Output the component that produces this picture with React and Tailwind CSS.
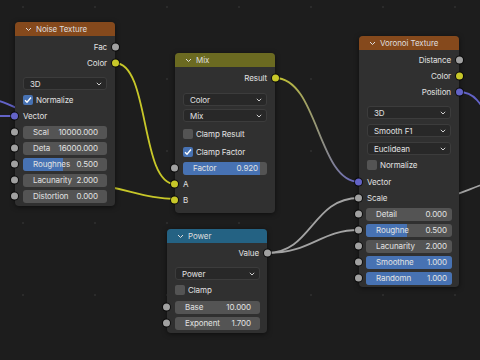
import React from "react";

const FONT = "font-['Inter','Liberation_Sans',sans-serif]";

function Socket({ side, color }) {
  const pos = side === "left" ? "left-[-4px]" : "right-[-4px]";
  const col =
    color === "yellow" ? "bg-[#c7c729]" : color === "purple" ? "bg-[#6363c7]" : "bg-[#a1a1a1]";
  return (
    <span
      className={`absolute top-1/2 -translate-y-1/2 ${pos} w-[7px] h-[7px] rounded-full ${col} ring-1 ring-black/70`}
    />
  );
}

function Out({ label, color }) {
  return (
    <div className="relative h-[16px] flex items-center justify-end pr-[8px]">
      <span>{label}</span>
      <Socket side="right" color={color} />
    </div>
  );
}

function In({ label, color, cls = "" }) {
  return (
    <div className={`relative h-[16px] flex items-center pl-[8px] ${cls}`}>
      <span>{label}</span>
      <Socket side="left" color={color} />
    </div>
  );
}

function Chev() {
  return (
    <svg width="6" height="4" viewBox="0 0 6 4" className="shrink-0">
      <polyline points="0.8,0.8 3,3 5.2,0.8" fill="none" stroke="#cfcfcf" strokeWidth="1" />
    </svg>
  );
}

function Dropdown({ label, cls = "" }) {
  return (
    <div
      className={`mx-[8px] h-[13px] rounded-[3px] bg-[#282828] border border-[#3c3c3c] flex items-center justify-between pl-[6px] pr-[4px] ${cls}`}
    >
      <span>{label}</span>
      <Chev />
    </div>
  );
}

function Field({ label, value, fill = 0, socket = true, pr = "pr-[9px]", px = "px-[8px]", cls = "" }) {
  return (
    <div className={`relative h-[16px] ${px} flex items-center ${cls}`}>
      {socket && <Socket side="left" />}
      <div className="relative flex-1 h-[13px] rounded-[3px] bg-[#545454] overflow-hidden">
        {fill > 0 && (
          <div className="absolute inset-y-0 left-0 bg-[#4772b3]" style={{ width: `${fill * 100}%` }} />
        )}
        <div className={`relative h-full flex items-center justify-between gap-[4px] pl-[10px] ${pr}`}>
          <span>{label}</span>
          <span>{value}</span>
        </div>
      </div>
    </div>
  );
}

function Check({ label, checked, cls = "" }) {
  return (
    <div className={`h-[16px] px-[8px] flex items-center gap-[3px] ${cls}`}>
      <span
        className={`w-[10px] h-[10px] rounded-[2px] flex items-center justify-center ${
          checked ? "bg-[#4772b3]" : "bg-[#545454]"
        }`}
      >
        {checked && (
          <svg width="8" height="8" viewBox="0 0 8 8">
            <polyline points="1,4.2 3,6.2 7,1.5" fill="none" stroke="#ffffff" strokeWidth="1.4" />
          </svg>
        )}
      </span>
      <span>{label}</span>
    </div>
  );
}

function Node({ pos, header, title, children }) {
  return (
    <div
      className={`absolute ${pos} w-[100px] rounded-[4px] bg-[#303030] shadow-[0_1px_5px_rgba(0,0,0,0.55)] text-[#e2e2e2]`}
    >
      <div className={`h-[14px] rounded-t-[4px] ${header} flex items-center pl-[10px] gap-[4px] text-[#dedede]`}>
        <svg width="7" height="5" viewBox="0 0 7 5">
          <polyline points="1,1 3.5,3.5 6,1" fill="none" stroke="#dedede" strokeWidth="1" />
        </svg>
        <span>{title}</span>
      </div>
      {children}
    </div>
  );
}

function Links() {
  const dots = [];
  for (let x = 23; x < 480; x += 72) {
    for (let y = 7; y < 360; y += 72) {
      dots.push(<rect key={`${x}-${y}`} x={x - 1} y={y - 1} width="2" height="2" fill="#2b2b2b" />);
    }
  }
  return (
    <svg className="absolute inset-0" width="480" height="360" viewBox="0 0 480 360">
      <defs>
        <linearGradient id="yp" gradientUnits="userSpaceOnUse" x1="275" y1="0" x2="359" y2="0">
          <stop offset="0" stopColor="#c7c729" />
          <stop offset="1" stopColor="#6363c7" />
        </linearGradient>
      </defs>
      {dots}
      <g fill="none" strokeWidth="1.8" strokeLinecap="round">
        <path d="M-5,116 L15,116" stroke="#6363c7" />
        <path d="M-5,100 C5,102 12,106 25,112" stroke="#6363c7" />
        <path d="M115,63 C150,63 140,184 175,184" stroke="#c7c729" />
        <path d="M95,184 C130,190 150,199 175,199" stroke="#c7c729" />
        <path d="M275,78 C318,78 318,182 359,182" stroke="url(#yp)" />
        <path d="M267,253 C312,253 312,198 359,198" stroke="#a3a3a3" />
        <path d="M267,253 C312,253 320,230 359,230" stroke="#a3a3a3" />
        <path d="M459,92 C476,92 482,106 492,124" stroke="#6363c7" />
        <path d="M440,198 C458,196 470,188 490,182" stroke="#a3a3a3" />
      </g>
    </svg>
  );
}

export default function App() {
  return (
    <div className={`relative w-[480px] h-[360px] overflow-hidden bg-[#1d1d1d] text-[8px] tracking-[-0.1px] leading-none ${FONT}`}>
      <Links />

      <Node pos="left-[15px] top-[22px]" header="bg-[#85491c]" title="Noise Texture">
        <div className="pt-[3px] pb-[2px]">
          <Out label="Fac" />
          <Out label="Color" color="yellow" />
          <Dropdown label="3D" cls="mt-[6px]" />
          <Check label="Normalize" checked cls="mt-[2px]" />
          <In label="Vector" color="purple" />
          <Field label="Scal" value="10000.000" />
          <Field label="Deta" value="16000.000" />
          <Field label="Roughnes" value="0.500" fill={0.48} />
          <Field label="Lacunarity" value="2.000" />
          <Field label="Distortion" value="0.000" />
        </div>
      </Node>

      <Node pos="left-[175px] top-[53px]" header="bg-[#6b6a21]" title="Mix">
        <div className="pt-[3px] pb-[5px]">
          <Out label="Result" color="yellow" />
          <Dropdown label="Color" cls="mt-[7px]" />
          <Dropdown label="Mix" cls="mt-[3px]" />
          <Check label="Clamp Result" cls="mt-[4px]" />
          <Check label="Clamp Factor" checked cls="mt-[2px]" />
          <Field label="Factor" value="0.920" fill={0.92} />
          <In label="A" color="yellow" cls="h-[15px]" />
          <In label="B" color="yellow" cls="h-[15px]" />
        </div>
      </Node>

      <Node pos="left-[167px] top-[229px]" header="bg-[#246283]" title="Power">
        <div className="pt-[2px] pb-[2px]">
          <Out label="Value" />
          <Dropdown label="Power" cls="mt-[6px] mr-[7px]" />
          <Check label="Clamp" cls="mt-[2px]" />
          <Field label="Base" value="10.000" cls="mt-[1px]" px="pl-[8px] pr-[7px]" />
          <Field label="Exponent" value="1.700" px="pl-[8px] pr-[7px]" />
        </div>
      </Node>

      <Node pos="left-[359px] top-[36px]" header="bg-[#85491c]" title="Voronoi Texture">
        <div className="pt-[2px] pb-[1px]">
          <Out label="Distance" />
          <Out label="Color" color="yellow" />
          <Out label="Position" color="purple" />
          <Dropdown label="3D" cls="mt-[6px] mx-[7px]" />
          <Dropdown label="Smooth F1" cls="mt-[5px] mx-[7px]" />
          <Dropdown label="Euclidean" cls="mt-[5px] mx-[7px]" />
          <Check label="Normalize" cls="mt-[2px] px-[7px]" />
          <In label="Vector" color="purple" cls="mt-[1px]" />
          <In label="Scale" />
          <Field label="Detail" value="0.000" px="px-[7px]" pr="pr-[5px]" />
          <Field label="Roughne" value="0.500" fill={0.48} px="px-[7px]" pr="pr-[5px]" />
          <Field label="Lacunarity" value="2.000" px="px-[7px]" pr="pr-[5px]" />
          <Field label="Smoothne" value="1.000" fill={1} px="px-[7px]" pr="pr-[5px]" />
          <Field label="Randomn" value="1.000" fill={1} px="px-[7px]" pr="pr-[5px]" />
        </div>
      </Node>
    </div>
  );
}
